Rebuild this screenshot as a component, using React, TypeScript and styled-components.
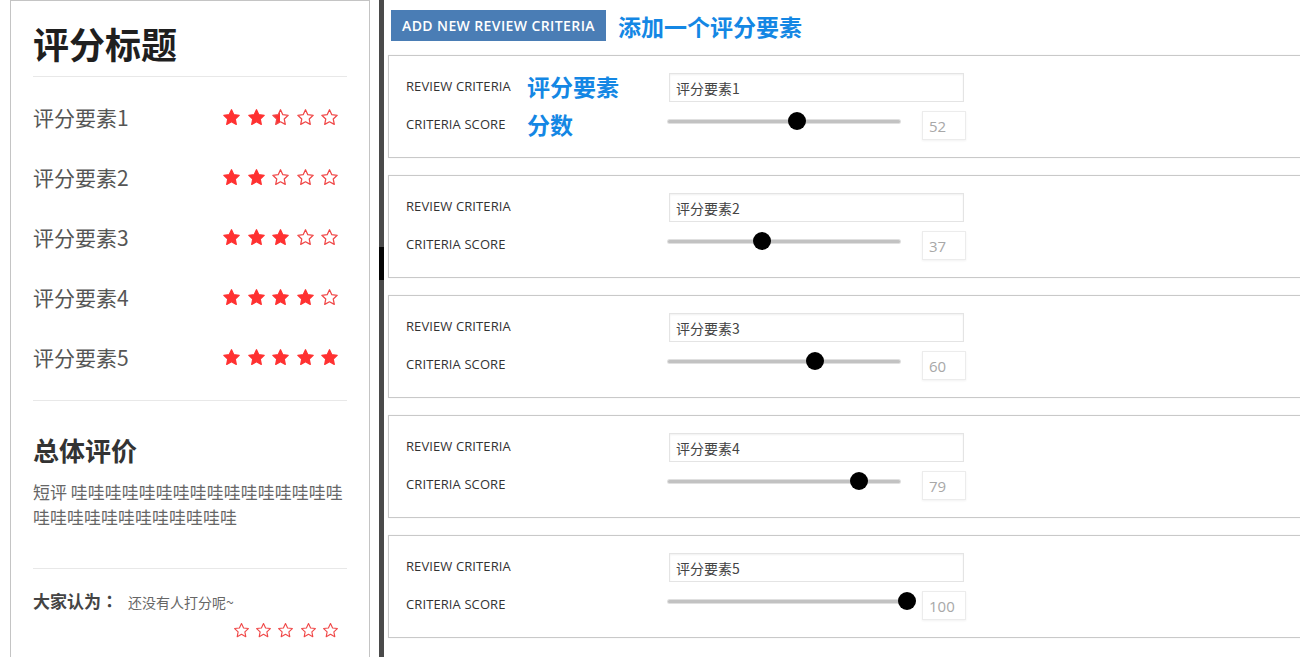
import React from "react";
import styled, { createGlobalStyle } from "styled-components";

type StarKind = "full" | "half" | "empty";

const STAR_PATH =
    "M12 2.2l2.95 6.2 6.75.85-4.95 4.7 1.3 6.75L12 17.4l-6.05 3.3 1.3-6.75-4.95-4.7 6.75-.85z";

const SHORT_REVIEW = `短评 ${"哇".repeat(28)}`;

const criteria = [
    { name: "评分要素1", score: 52, stars: 2.5 },
    { name: "评分要素2", score: 37, stars: 2 },
    { name: "评分要素3", score: 60, stars: 3 },
    { name: "评分要素4", score: 79, stars: 4 },
    { name: "评分要素5", score: 100, stars: 5 },
];

const Star = ({ kind, size, id }: { kind: StarKind; size: number; id: string }) => {
    const fill = kind === "full" ? "#ff3131" : kind === "half" ? `url(#${id})` : "#fff";
    return (
        <svg width={size} height={size} viewBox="0 0 24 24">
            {kind === "half" && (
                <defs>
                    <linearGradient id={id} x1="0" x2="1" y1="0" y2="0">
                        <stop offset="50%" stopColor="#ff3131" />
                        <stop offset="50%" stopColor="#fff" />
                    </linearGradient>
                </defs>
            )}
            <path d={STAR_PATH} fill={fill} stroke={kind === "full" ? "#ff3131" : "#f04848"} strokeWidth={1.6} strokeLinejoin="round" />
        </svg>
    );
};

const StarRow = ({ value, size, gap, prefix }: { value: number; size: number; gap: number; prefix: string }) => (
    <Stars $gap={gap}>
        {[0, 1, 2, 3, 4].map((i) => {
            const kind: StarKind = value >= i + 1 ? "full" : value > i ? "half" : "empty";
            return <Star key={i} kind={kind} size={size} id={`${prefix}-${i}`} />;
        })}
    </Stars>
);

const Slider = ({ value }: { value: number }) => (
    <Track>
        <Thumb style={{ left: value * 2.3 }} />
    </Track>
);

export default function App() {
    return (
        <>
            <GlobalStyle />
            <Page>
                <ReviewPanel>
                    <Title>评分标题</Title>
                    <RatingList>
                        {criteria.map((c, i) => (
                            <RatingRow key={c.name}>
                                <RatingName>{c.name}</RatingName>
                                <StarRow value={c.stars} size={19} gap={5.5} prefix={`r${i}`} />
                            </RatingRow>
                        ))}
                    </RatingList>
                    <Summary>
                        <SummaryTitle>总体评价</SummaryTitle>
                        <SummaryText>{SHORT_REVIEW}</SummaryText>
                    </Summary>
                    <Crowd>
                        <CrowdLine>
                            <CrowdLabel>
                                大家认为<Colon>：</Colon>
                            </CrowdLabel>
                            <CrowdNote>还没有人打分呢~</CrowdNote>
                        </CrowdLine>
                        <StarRow value={0} size={17} gap={5.3} prefix="crowd" />
                    </Crowd>
                </ReviewPanel>
                <Splitter>
                    <SplitterMark />
                </Splitter>
                <Editor>
                    <Header>
                        <AddButton>Add new review criteria</AddButton>
                        <Note>添加一个评分要素</Note>
                    </Header>
                    <CardList>
                        {criteria.map((c, i) => (
                            <Card key={c.name}>
                                <LabelCell>
                                    <LabelText>Review criteria</LabelText>
                                    {i === 0 && <Note>评分要素</Note>}
                                </LabelCell>
                                <NameInput defaultValue={c.name} />
                                <LabelCell>
                                    <LabelText>Criteria score</LabelText>
                                    {i === 0 && <Note>分数</Note>}
                                </LabelCell>
                                <ScoreRow>
                                    <Slider value={c.score} />
                                    <ScoreBox readOnly value={c.score} />
                                </ScoreRow>
                            </Card>
                        ))}
                    </CardList>
                </Editor>
            </Page>
        </>
    );
}

const GlobalStyle = createGlobalStyle`
    html, body {
        margin: 0;
        padding: 0;
        background: #fff;
        overflow: hidden;
    }
    body {
        font-family: "Noto Sans CJK SC", sans-serif;
    }
`;

const Page = styled.div`
    display: flex;
    align-items: flex-start;
    width: 1340px;
    height: 657px;
    overflow: hidden;
    padding-left: 10px;
`;

const ReviewPanel = styled.div`
    flex-shrink: 0;
    box-sizing: border-box;
    width: 360px;
    height: 700px;
    border: 1px solid #c4c4c4;
    padding: 18px 22px 0;
    display: flex;
    flex-direction: column;
`;

const Title = styled.h1`
    margin: 0;
    font-size: 36px;
    line-height: 48px;
    font-weight: 700;
    color: #1f1f1f;
    padding-bottom: 9px;
    border-bottom: 1px solid #e8e8e8;
`;

const RatingList = styled.div`
    display: flex;
    flex-direction: column;
    padding: 10px 0 13px;
    border-bottom: 1px solid #e8e8e8;
`;

const RatingRow = styled.div`
    display: flex;
    align-items: center;
    justify-content: space-between;
    height: 60px;
`;

const RatingName = styled.span`
    font-size: 21px;
    color: #555;
`;

const Stars = styled.div<{ $gap: number }>`
    display: flex;
    align-items: center;
    gap: ${(p) => p.$gap}px;
    padding-right: 8px;

    svg {
        display: block;
    }
`;

const Summary = styled.div`
    padding: 31px 0 39px;
    border-bottom: 1px solid #e8e8e8;
`;

const SummaryTitle = styled.h2`
    margin: 0;
    font-size: 26px;
    line-height: 36px;
    font-weight: 700;
    color: #333;
`;

const SummaryText = styled.p`
    margin: 11px 0 0;
    font-size: 17px;
    line-height: 25px;
    color: #666;
    word-break: break-all;
`;

const Crowd = styled.div`
    display: flex;
    flex-direction: column;
    align-items: flex-end;
    padding-top: 19px;
    gap: 7px;
`;

const CrowdLine = styled.div`
    align-self: stretch;
    display: flex;
    align-items: baseline;
    line-height: 26px;
`;

const CrowdLabel = styled.span`
    font-size: 17px;
    font-weight: 700;
    color: #444;
`;

const Colon = styled.span`
    font-family: "Noto Sans CJK TC", sans-serif;
`;

const CrowdNote = styled.span`
    margin-left: 10px;
    font-size: 14px;
    color: #666;
`;

const Splitter = styled.div`
    flex-shrink: 0;
    width: 5px;
    height: 657px;
    margin-left: 9px;
    background: #4a4a4a;
    padding-top: 247px;
    box-sizing: border-box;
`;

const SplitterMark = styled.div`
    height: 33px;
    background: #050505;
`;

const Editor = styled.div`
    flex-shrink: 0;
    width: 950px;
    margin-left: 4px;
    padding-top: 10px;
    display: flex;
    flex-direction: column;
    font-family: "Open Sans", "Noto Sans CJK SC", sans-serif;
`;

const Header = styled.div`
    display: flex;
    align-items: center;
    gap: 12px;
    padding-left: 3px;
`;

const AddButton = styled.button`
    height: 31px;
    padding: 0 11px;
    border: none;
    background: #4a7db5;
    color: #fff;
    font-family: "Open Sans", sans-serif;
    font-size: 14px;
    font-weight: 600;
    letter-spacing: 0.4px;
    text-transform: uppercase;
`;

const Note = styled.span`
    font-family: "Noto Sans CJK SC", sans-serif;
    font-size: 23px;
    line-height: 26px;
    font-weight: 700;
    color: #1487e4;
`;

const CardList = styled.div`
    display: flex;
    flex-direction: column;
    gap: 17px;
    margin-top: 14px;
`;

const Card = styled.div`
    display: grid;
    grid-template-columns: 263px auto;
    row-gap: 9px;
    align-items: start;
    padding: 17px 0 17px 17px;
    border: 1px solid #c9c9c9;
    box-shadow: 0 0 1px #e4e4e4;
`;

const LabelCell = styled.div`
    display: flex;
    align-items: center;
    height: 26px;
`;

const LabelText = styled.span`
    width: 121px;
    font-size: 13px;
    letter-spacing: 0.1px;
    color: #333;
    text-transform: uppercase;
`;

const NameInput = styled.input`
    box-sizing: border-box;
    width: 295px;
    height: 29px;
    padding: 0 6px;
    border: 1px solid #e4e4e4;
    box-shadow: inset 0 1px 2px #f0f0f0;
    font-family: "Noto Sans CJK SC", sans-serif;
    font-size: 14px;
    color: #444;
    outline: none;
`;

const ScoreRow = styled.div`
    display: flex;
    align-items: flex-start;
    margin-left: -1px;
`;

const Track = styled.div`
    position: relative;
    width: 232px;
    height: 3px;
    margin-top: 9px;
    border-radius: 2px;
    background: #c2c2c2;
    box-shadow: 0 0 0 1px #e0e0e0;
`;

const Thumb = styled.div`
    position: absolute;
    top: -8px;
    width: 18px;
    height: 18px;
    border-radius: 50%;
    background: #000;
`;

const ScoreBox = styled.input`
    box-sizing: border-box;
    width: 44px;
    height: 29px;
    margin-left: 22px;
    padding: 0 6px;
    border: 1px solid #ececec;
    box-shadow: 0 1px 2px #f2f2f2;
    font-family: "Open Sans", sans-serif;
    font-size: 15px;
    color: #a8a8a8;
    outline: none;
`;
